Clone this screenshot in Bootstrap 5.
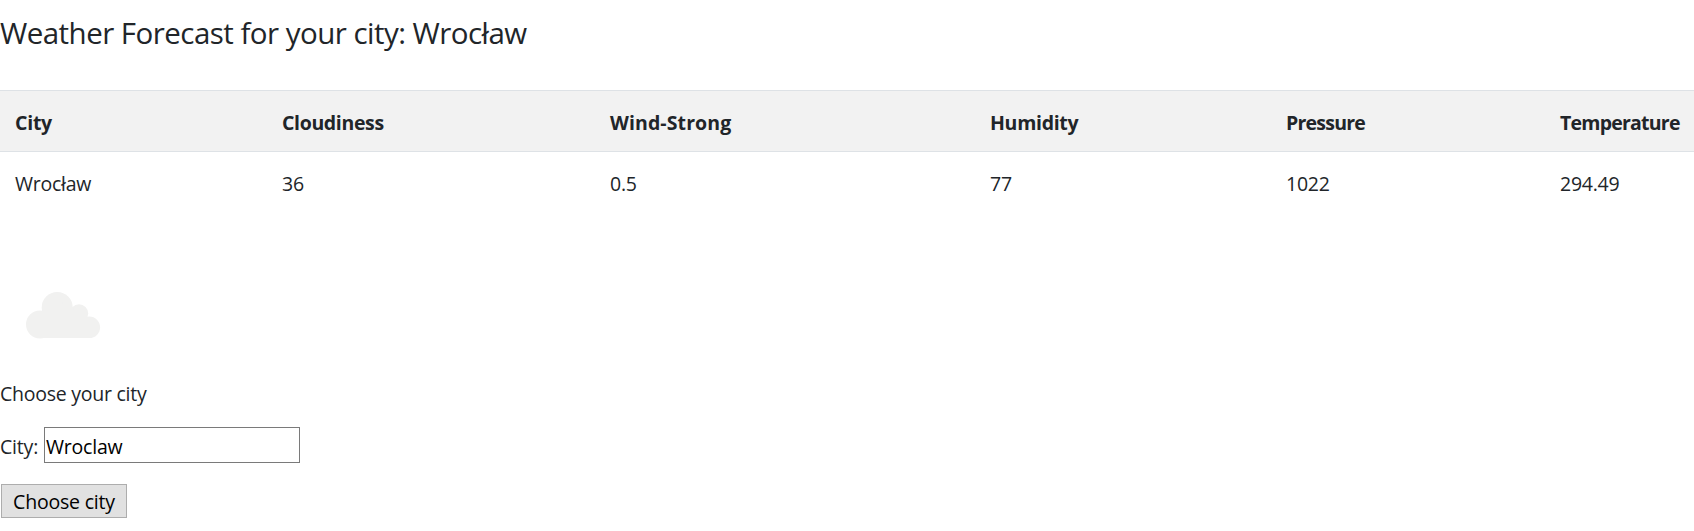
<!DOCTYPE html>
<html lang="en">
<head>
<meta charset="utf-8">
<title>Weather Forecast</title>
<link href="https://cdn.jsdelivr.net/npm/bootstrap@5.3.0/dist/css/bootstrap.min.css" rel="stylesheet">
<style>
body{font-family:"Open Sans","Noto Sans",sans-serif;font-size:19.5px;line-height:30px;color:#212529;letter-spacing:-.25px}
.page-title{font-size:29.5px;font-weight:400;line-height:36px;margin:15px 0 39px;letter-spacing:-.53px}
.forecast{table-layout:fixed;width:100%;font-size:19.5px;line-height:30px}
.forecast>thead>tr>th,.forecast>tbody>tr>td{padding:17px 0 13px 15px;border:0;box-shadow:none;color:#212529}
.forecast>thead>tr>th{background:#f2f2f2;border-top:1px solid #dee2e6;border-bottom:1px solid #dee2e6}
.c-city{width:267px}.c-cloud{width:328px}.c-wind{width:380px}.c-hum{width:296px}.c-pres{width:274px}
.t-cloud{letter-spacing:-.35px}.t-wind{letter-spacing:.1px}.t-hum{letter-spacing:-.3px}.t-pres{letter-spacing:-.77px}.t-temp{letter-spacing:-.77px}
.sky{height:167px;padding-top:40px}
.city-row{margin-top:18px}
.city-input{width:256px;height:36px;border:1px solid #7a7a7a;padding:3px 1px 0;color:#000;letter-spacing:-.2px}
.city-label{padding-top:2px;width:44px;height:36px;line-height:36px;letter-spacing:-.2px}
.city-btn{width:126px;height:34px;margin:21px 0 0 1px;padding:2px 0 0;border:1px solid #adadad;background:#e1e1e1;color:#000;letter-spacing:-.2px}
</style>
</head>
<body>
<h3 class="page-title">Weather Forecast for your city: Wrocław</h3>
<table class="forecast table mb-0">
<colgroup><col class="c-city"><col class="c-cloud"><col class="c-wind"><col class="c-hum"><col class="c-pres"><col></colgroup>
<thead><tr><th>City</th><th class="t-cloud">Cloudiness</th><th class="t-wind">Wind-Strong</th><th class="t-hum">Humidity</th><th class="t-pres">Pressure</th><th class="t-temp">Temperature</th></tr></thead>
<tbody><tr><td>Wrocław</td><td>36</td><td>0.5</td><td>77</td><td>1022</td><td>294.49</td></tr></tbody>
</table>
<div class="sky">
<svg class="d-block" width="125" height="125" viewBox="0 252 125 125" fill="#f1f1f0" role="img" aria-label="Clouds"><circle cx="57.2" cy="307.5" r="15.5"/><circle cx="40" cy="324.5" r="14"/><circle cx="79" cy="313.5" r="9.2"/><circle cx="89.3" cy="327.3" r="10.8"/><path d="M36 338V319L57 300L79 312L92 327V338Z"/></svg>
</div>
<form onsubmit="return false">
<div>Choose your city</div>
<div class="city-row d-flex"><label class="city-label" for="city">City:</label><input class="city-input rounded-0" id="city" type="text" value="Wroclaw"></div>
<button class="city-btn rounded-0 d-block" type="submit">Choose city</button>
</form>
<script src="https://cdn.jsdelivr.net/npm/bootstrap@5.3.0/dist/js/bootstrap.bundle.min.js"></script>
</body>
</html>
